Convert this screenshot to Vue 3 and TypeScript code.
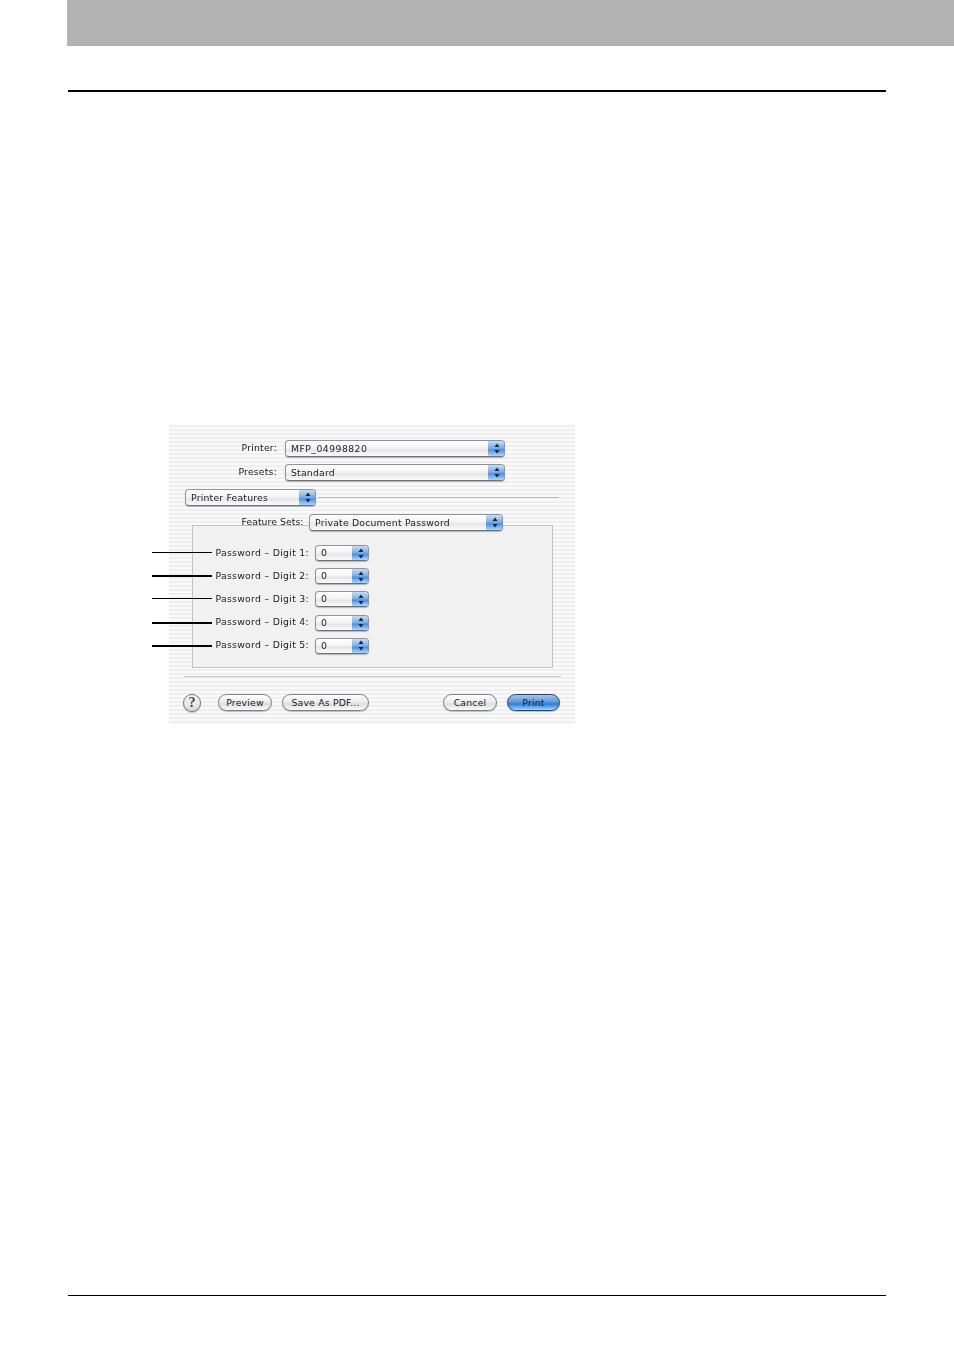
<script setup lang="ts">
// Print dialog screenshot placed on a manual page
interface DigitRow {
  label: string;
  thick: boolean;
}

const digits: DigitRow[] = [
  { label: 'Password – Digit 1:', thick: false },
  { label: 'Password – Digit 2:', thick: true },
  { label: 'Password – Digit 3:', thick: false },
  { label: 'Password – Digit 4:', thick: true },
  { label: 'Password – Digit 5:', thick: true }
];
</script>

<template>
  <div class="page">
    <div class="header-band"></div>
    <div class="header-rule"></div>

    <div class="dialog">
      <div class="form-row top-row">
        <span class="label">Printer:</span>
        <div class="select wide">
          <span class="value printer-value">MFP_04998820</span>
          <span class="cap"><svg width="6" height="11" viewBox="0 0 6 11"><path d="M3 0.5 5.5 4H0.5ZM0.5 7H5.5L3 10.5Z" fill="#16233a" /></svg></span>
        </div>
      </div>
      <div class="form-row presets-row">
        <span class="label">Presets:</span>
        <div class="select wide">
          <span class="value">Standard</span>
          <span class="cap"><svg width="6" height="11" viewBox="0 0 6 11"><path d="M3 0.5 5.5 4H0.5ZM0.5 7H5.5L3 10.5Z" fill="#16233a" /></svg></span>
        </div>
      </div>

      <div class="features-row">
        <div class="select features">
          <span class="value">Printer Features</span>
          <span class="cap"><svg width="6" height="11" viewBox="0 0 6 11"><path d="M3 0.5 5.5 4H0.5ZM0.5 7H5.5L3 10.5Z" fill="#16233a" /></svg></span>
        </div>
        <div class="features-line"></div>
      </div>

      <div class="form-row sets-row">
        <span class="label sets-label">Feature Sets:</span>
        <div class="select sets">
          <span class="value">Private Document Password</span>
          <span class="cap"><svg width="6" height="11" viewBox="0 0 6 11"><path d="M3 0.5 5.5 4H0.5ZM0.5 7H5.5L3 10.5Z" fill="#16233a" /></svg></span>
        </div>
      </div>

      <div class="group-box">
        <div v-for="row in digits" :key="row.label" class="digit-row">
          <span class="leader" :class="{ thick: row.thick }"></span>
          <span class="label digit-label">{{ row.label }}</span>
          <div class="select digit">
            <span class="value">0</span>
            <span class="cap"><svg width="6" height="11" viewBox="0 0 6 11"><path d="M3 0.5 5.5 4H0.5ZM0.5 7H5.5L3 10.5Z" fill="#16233a" /></svg></span>
          </div>
        </div>
      </div>

      <div class="bottom-line"></div>

      <div class="button-row">
        <span class="help">?</span>
        <button class="pill preview">Preview</button>
        <button class="pill save">Save As PDF...</button>
        <button class="pill cancel">Cancel</button>
        <button class="pill print">Print</button>
      </div>
    </div>

    <div class="footer-rule"></div>
  </div>
</template>

<style>
html,
body {
  background: #fff;
}
</style>

<style scoped>
.page {
  position: relative;
  width: 954px;
  height: 1350px;
  overflow: hidden;
  background: #fff;
  font-family: "DejaVu Sans", sans-serif;
}

.header-band {
  height: 46px;
  margin-left: 67px;
  background: #b2b2b2;
}

.header-rule {
  width: 818px;
  height: 2px;
  margin: 44px 0 0 68px;
  background: #000;
}

.dialog {
  position: relative;
  box-sizing: border-box;
  width: 406px;
  height: 300px;
  margin: 333px 0 0 169px;
  padding-top: 15px;
  background: repeating-linear-gradient(to bottom, #efefef 0, #efefef 2px, #fafafa 2px, #fafafa 4px);
  color: #222;
  font-size: 9.3px;
  letter-spacing: 0.2px;
}

.form-row {
  display: flex;
  align-items: center;
  height: 17px;
}

.label {
  box-sizing: border-box;
  flex: none;
  width: 108px;
  margin-top: -2px;
  text-align: right;
  white-space: nowrap;
  filter: blur(0.25px);
}

.presets-row {
  margin-top: 7px;
}

.select {
  display: flex;
  flex: none;
  box-sizing: border-box;
  height: 17px;
  overflow: hidden;
  border: 1px solid #8f939b;
  border-bottom-color: #6c7079;
  border-radius: 4px;
  background: linear-gradient(to bottom, #fff 0, #f4f4f4 45%, #e6e6e6 60%, #fbfbfb 100%);
  box-shadow: 0 1px 1px rgba(0, 0, 0, 0.25);
}

.value {
  flex: 1;
  padding-left: 5px;
  line-height: 15px;
  white-space: nowrap;
  filter: blur(0.25px);
}

.printer-value {
  letter-spacing: 0.45px;
}

.cap {
  display: flex;
  flex: none;
  box-sizing: border-box;
  align-items: center;
  justify-content: center;
  width: 16px;
  padding-left: 1px;
  background: linear-gradient(to bottom, #c4dcf6 0, #7eb0ea 45%, #4e90e4 60%, #a8d8fa 100%);
}

.wide {
  width: 220px;
  margin-left: 8px;
}

.features-row {
  display: flex;
  align-items: center;
  height: 17px;
  margin: 8px 0 0 16px;
}

.features {
  width: 131px;
}

.features-line {
  flex: none;
  width: 241px;
  height: 1px;
  margin: -1px 0 0 2px;
  background: #bdbdbd;
}

.sets-row {
  position: relative;
  z-index: 1;
  margin-top: 8px;
}

.sets-label {
  width: 134.5px;
  letter-spacing: 0.05px;
}

.sets {
  width: 194px;
  margin-left: 5.5px;
}

.group-box {
  box-sizing: border-box;
  width: 361px;
  height: 143px;
  margin: -6px 0 0 23px;
  padding-top: 19px;
  border: 1px solid #c3c3c3;
  background: #f1f1f1;
}

.digit-row {
  position: relative;
  display: flex;
  align-items: center;
  height: 16px;
  margin-bottom: 7.2px;
}

.digit-label {
  width: 116px;
  margin-top: -2px;
  letter-spacing: 0.3px;
}

.digit {
  width: 54px;
  height: 16px;
  margin-left: 6px;
}

.digit .value {
  line-height: 14px;
}

.leader {
  position: absolute;
  top: 7px;
  left: -41px;
  width: 60px;
  height: 1px;
  background: #000;
}

.leader.thick {
  height: 2px;
}

.bottom-line {
  width: 377px;
  height: 1px;
  margin: 8px 0 0 15px;
  background: #c4c4c4;
}

.button-row {
  display: flex;
  align-items: center;
  height: 17px;
  margin: 17px 0 0 14px;
}

.help {
  box-sizing: border-box;
  flex: none;
  width: 18px;
  height: 18px;
  border: 1px solid #777;
  border-radius: 50%;
  background: linear-gradient(to bottom, #fafafa, #dcdcdc);
  box-shadow: 0 1px 1px rgba(0, 0, 0, 0.25);
  color: #444;
  font-family: "Liberation Serif", serif;
  font-size: 14px;
  font-weight: 700;
  line-height: 16px;
  text-align: center;
  letter-spacing: 0;
}

.pill {
  flex: none;
  box-sizing: border-box;
  height: 17px;
  padding: 0;
  border: 1px solid #7b7f87;
  border-radius: 9px;
  background: linear-gradient(to bottom, #fff 0, #ededed 45%, #dedede 60%, #fbfbfb 100%);
  box-shadow: 0 1px 1px rgba(0, 0, 0, 0.25);
  color: #222;
  font: inherit;
  line-height: 15px;
  letter-spacing: inherit;
}

.preview {
  width: 54px;
  margin-left: 17px;
}

.save {
  width: 87px;
  margin-left: 10px;
}

.cancel {
  width: 54px;
  margin-left: 74px;
}

.print {
  width: 53px;
  margin-left: 10px;
  border-color: #23466f;
  background: linear-gradient(to bottom, #a5c4e8 0, #5d9be3 45%, #2f7ddb 60%, #9fd6f8 100%);
  color: #10243c;
}

.footer-rule {
  width: 818px;
  height: 1px;
  margin: 570px 0 0 68px;
  background: #000;
}
</style>
